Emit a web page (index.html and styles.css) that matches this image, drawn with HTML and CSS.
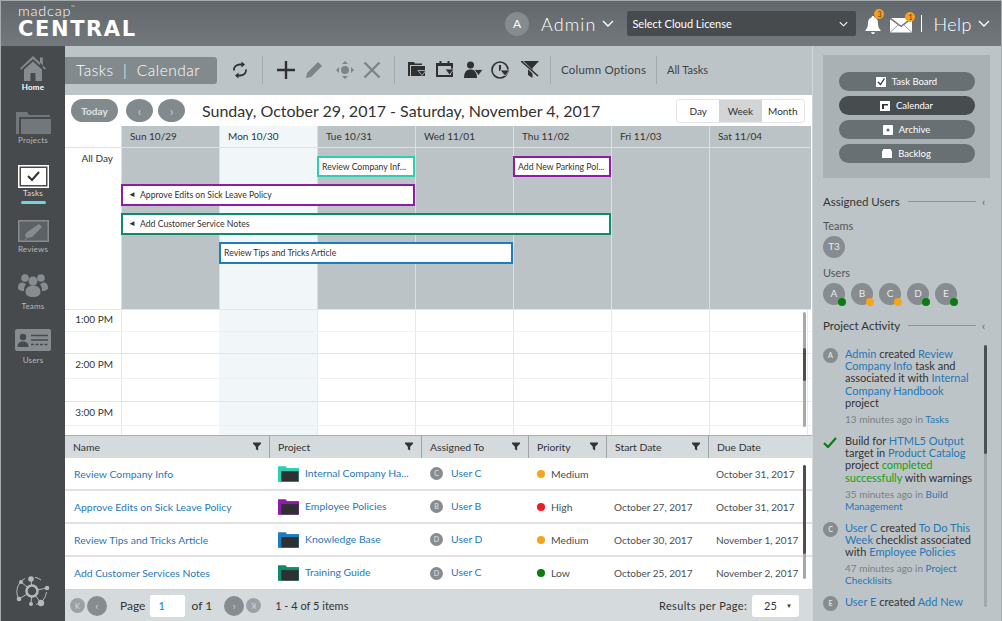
FILE: index.html
```html
<!DOCTYPE html>
<html lang="en">
<head>
    <meta charset="UTF-8">
    <title>MadCap Central - Tasks Calendar</title>
    <link rel="stylesheet" href="styles.css">
</head>
<body>
<svg class="defs" width="0" height="0">
    <symbol id="funnel" viewBox="0 0 10 10"><path d="M0 0h10v1.500L6.400 5.200V10L3.600 8.400V5.200L0 1.500z" fill="currentColor"/></symbol>
    <symbol id="folder" viewBox="0 0 22 16"><path d="M0 0h8l1.500 2H22v2H3v12H0z" fill="currentColor"/><rect x="1" y="2" width="21" height="14" fill="currentColor"/><rect x="3.500" y="5" width="18" height="11" fill="#2e3032"/></symbol>
    <symbol id="chev" viewBox="0 0 12 7"><path d="M1 1l5 5 5-5" fill="none" stroke="currentColor" stroke-width="1.400"/></symbol>
</svg>
<div class="app">
    <header class="topbar">
        <div class="logo">
            <div class="logo-small">madcap<sup>™</sup></div>
            <div class="logo-big">CENTRAL</div>
        </div>
        <div class="avatar-top">A</div>
        <div class="admin">Admin</div>
        <svg class="chev-top"><use href="#chev"/></svg>
        <div class="license">
            <span>Select Cloud License</span>
            <svg class="chev-small"><use href="#chev"/></svg>
        </div>
        <div class="notify">
            <svg width="16" height="20" viewBox="0 0 16 20"><path d="M8 1c.9 0 1.400.6 1.400 1.400C12 3.100 13 5.300 13 8c0 3.500.8 5.500 2.500 7v1H.5v-1C2.200 13.500 3 11.500 3 8c0-2.700 1-4.900 3.600-5.600C6.600 1.600 7.100 1 8 1zM6 17.200h4C9.800 18.400 9 19 8 19s-1.800-.6-2-1.800z" fill="#fff"/></svg>
            <span class="badge">3</span>
        </div>
        <div class="notify mail">
            <svg width="22" height="15" viewBox="0 0 22 15"><path d="M0 1l11 8 11-8v13.500H0z" fill="#fff"/><path d="M1 0h20L11 7.500z" fill="#fff"/><path d="M0 14.500l8-7.500M22 14.500L14 7M0 .7l11 8 11-8" stroke="#7b8185" stroke-width=".8" fill="none"/></svg>
            <span class="badge">1</span>
        </div>
        <div class="pipe"></div>
        <div class="help">Help</div>
        <svg class="chev-top"><use href="#chev"/></svg>
    </header>

    <div class="content">
        <nav class="sidenav">
            <a class="nav-item nav-home">
                <svg width="26" height="26" viewBox="0 0 26 26"><path d="M13 1L0 13.500l1.200 1L13 4l7 6.200V2.500h2.800v10.300l2 1.700 1.200-1zM4 14.500L13 6.500l9 8V26h-6.500v-8h-5v8H4z" fill="#868c90"/></svg>
                <span>Home</span>
            </a>
            <a class="nav-item nav-projects">
                <svg width="35" height="22" viewBox="0 0 35 22"><path d="M0 0h11l2 3h21v2H3v17H0z" fill="#71777a"/><rect x="5" y="7" width="30" height="15" fill="#71777a"/></svg>
                <span>Projects</span>
            </a>
            <a class="nav-item nav-active">
                <svg width="31" height="23" viewBox="0 0 31 23"><rect x=".75" y=".75" width="29.500" height="21.500" fill="#464a4d" stroke="#fff" stroke-width="1.500"/><rect x="3" y="3" width="25" height="17" fill="#fff"/><path d="M10 11l4 4 7-8" fill="none" stroke="#333" stroke-width="2"/></svg>
                <span>Tasks</span>
                <i class="nav-mark"></i>
            </a>
            <a class="nav-item nav-reviews">
                <svg width="31" height="22" viewBox="0 0 31 22"><rect x=".75" y=".75" width="29.500" height="20.500" fill="#5b6164" stroke="#868c90" stroke-width="1.500"/><path d="M9 18l-2-2 1-3L21 4l3 3-10 10z" fill="#868c90"/><path d="M7 20l2-2" stroke="#868c90"/></svg>
                <span>Reviews</span>
            </a>
            <a class="nav-item">
                <svg width="30" height="25" viewBox="0 0 30 25" fill="#868c90"><circle cx="7" cy="5" r="3.800"/><circle cx="23" cy="5" r="3.800"/><circle cx="15" cy="8" r="4.500"/><path d="M0 15c0-4 2-5.500 4-5.500 1.500 0 3 .8 4 2-1.500 1.500-2 3-2 6.500-3 0-6-1-6-3zM30 15c0-4-2-5.500-4-5.500-1.500 0-3 .8-4 2 1.500 1.500 2 3 2 6.500 3 0 6-1 6-3zM7.500 19c0-4 3-6.500 7.500-6.500s7.500 2.500 7.500 6.500c0 3-3 5-7.500 5s-7.500-2-7.500-5z"/></svg>
                <span>Teams</span>
            </a>
            <a class="nav-item nav-users">
                <svg width="36" height="22" viewBox="0 0 36 22"><rect width="36" height="22" rx="2" fill="#868c90"/><circle cx="8" cy="8" r="3.200" fill="#464a4d"/><path d="M2.500 18c0-4 2.500-5.500 5.500-5.500s5.500 1.500 5.500 5.500z" fill="#464a4d"/><path d="M16 6.500h17M16 11h17" stroke="#464a4d" stroke-width="1.500"/><path d="M16 15.500h17" stroke="#464a4d" stroke-width="1.500" stroke-dasharray="3 1.500"/></svg>
                <span>Users</span>
            </a>
            <svg class="nav-network" width="36" height="34" viewBox="0 0 36 34" fill="none" stroke="#b4b9bc" stroke-width="1">
                <path d="M10 3.500A15 15 0 0 0 5 26M21 29.500A15 15 0 0 0 31.500 17M26 5A15 15 0 0 0 20 2.300"/>
                <path d="M17 16L16 3M17 16L32 13M17 16L6 7M17 16L4 24M17 16L16 29M17 16L26 28"/>
                <g fill="#b4b9bc" stroke="none"><circle cx="16" cy="4" r="2.800"/><circle cx="32" cy="13" r="2.300"/><circle cx="6" cy="7" r="2"/><circle cx="4" cy="24" r="2.300"/><circle cx="16" cy="29" r="2"/><circle cx="26" cy="28" r="3.200"/></g>
                <circle cx="17" cy="16" r="5.500" fill="#464a4d" stroke-width="2.500"/>
            </svg>
        </nav>

        <main class="main">
            <div class="toolbar">
                <div class="page-tab">Tasks&nbsp; | &nbsp;Calendar</div>
                <svg class="tool tool-refresh" width="16" height="18" viewBox="0 0 16 18" fill="none" stroke="#2e3032" stroke-width="1.800"><path d="M2 9.500C1.500 6 4.500 3.500 8 3.500h3"/><path d="M14 8.500c.5 3.500-2.500 6-6 6H5"/><path d="M9.500 .5l3.500 3-3.500 3zM6.500 11.500l-3.500 3 3.500 3z" fill="#2e3032" stroke="none"/></svg>
                <i class="sep sep-a"></i>
                <svg class="tool tool-plus" width="18" height="18" viewBox="0 0 18 18"><path d="M7.800 0h2.400v7.800H18v2.400h-7.800V18H7.800v-7.800H0V7.800h7.800z" fill="#2e3032"/></svg>
                <svg class="tool tool-pencil" width="18" height="18" viewBox="0 0 18 18"><path d="M13 1l4 4L6 16l-5 1 1-5z" fill="#7e8386"/></svg>
                <svg class="tool tool-move" width="18" height="18" viewBox="0 0 18 18" fill="#7e8386"><path d="M9 0l3 3H6zM9 18l-3-3h6zM0 9l3-3v6zM18 9l-3 3V6z"/><circle cx="9" cy="9" r="4"/></svg>
                <svg class="tool tool-x" width="18" height="18" viewBox="0 0 18 18"><path d="M1.500 1.500l15 15M16.500 1.500l-15 15" stroke="#7e8386" stroke-width="2.400"/></svg>
                <i class="sep sep-b"></i>
                <svg class="tool tool-f1" width="18" height="15" viewBox="0 0 18 15" fill="#2e3032"><path d="M0 0h6l1 1.500h7v1.500H2v11H0z"/><rect x="3" y="4" width="14" height="10"/><path d="M10 8.500h8l-4 5z" stroke="#bdc4c7" stroke-width=".8"/></svg>
                <svg class="tool tool-f2" width="18" height="17" viewBox="0 0 18 17" fill="none" stroke="#2e3032" stroke-width="2"><path d="M1 3h15v12H1z"/><path d="M1 3.500h15" stroke-width="3"/><path d="M4.500 0v3M12.500 0v3"/><path d="M9 8h9l-4.500 6z" fill="#2e3032" stroke="#bdc4c7" stroke-width=".8"/></svg>
                <svg class="tool tool-f3" width="19" height="17" viewBox="0 0 19 17" fill="#2e3032"><circle cx="6.500" cy="4" r="3.500"/><path d="M0 17c0-6 2.500-8.500 6.500-8.500S13 11 13 17z"/><path d="M10 8.500h9l-4.500 6z" stroke="#bdc4c7" stroke-width=".8"/></svg>
                <svg class="tool tool-f4" width="19" height="18" viewBox="0 0 19 18" fill="none" stroke="#2e3032" stroke-width="1.600"><circle cx="9" cy="9" r="8"/><path d="M9 4v6" stroke-width="2"/><path d="M9 9h10l-5 6z" fill="#2e3032" stroke="#bdc4c7" stroke-width=".8"/></svg>
                <svg class="tool tool-f5" width="18" height="17" viewBox="0 0 18 17" fill="#2e3032"><path d="M0 0h18l-6.500 7V17L7 14V7z"/><path d="M1.500 1L16 15" stroke="#bdc4c7" stroke-width="2.800"/><path d="M0 0l17 15" stroke="#2e3032" stroke-width="1.600"/></svg>
                <i class="sep sep-c"></i>
                <span class="tool-link tool-cols">Column Options</span>
                <i class="sep sep-d"></i>
                <span class="tool-link tool-all">All Tasks</span>
            </div>

            <section class="calendar">
                <div class="cal-top">
                    <button class="pill">Today</button>
                    <button class="round">‹</button>
                    <button class="round">›</button>
                    <h1 class="cal-title">Sunday, October 29, 2017 - Saturday, November 4, 2017</h1>
                    <div class="views">
                        <span>Day</span>
                        <span class="view-on">Week</span>
                        <span>Month</span>
                    </div>
                </div>
                <div class="cal-grid">
                    <div class="day-heads">
                        <div class="gutter"></div>
                        <div>Sun 10/29</div>
                        <div class="today">Mon 10/30</div>
                        <div>Tue 10/31</div>
                        <div>Wed 11/01</div>
                        <div>Thu 11/02</div>
                        <div>Fri 11/03</div>
                        <div>Sat 11/04</div>
                    </div>
                    <div class="allday">
                        <div class="allday-label">All Day</div>
                        <div class="col c1"></div>
                        <div class="col c2 today"></div>
                        <div class="col c3"></div>
                        <div class="col c4"></div>
                        <div class="col c5"></div>
                        <div class="col c6"></div>
                        <div class="col c7"></div>
                        <div class="event ev-teal">Review Company Inf...</div>
                        <div class="event ev-parking">Add New Parking Pol...</div>
                        <div class="event ev-purple"><b>◄</b>Approve Edits on Sick Leave Policy</div>
                        <div class="event ev-green"><b>◄</b>Add Customer Service Notes</div>
                        <div class="event ev-blue">Review Tips and Tricks Article</div>
                    </div>
                    <div class="times">
                        <div class="time-row"><span>1:00 PM</span></div>
                        <div class="time-row half"></div>
                        <div class="time-row"><span>2:00 PM</span></div>
                        <div class="time-row half"></div>
                        <div class="time-row"><span>3:00 PM</span></div>
                        <div class="time-row half"></div>
                        <i class="scroll scroll-cal"><i></i></i>
                    </div>
                </div>
            </section>

            <section class="tasks">
                <table class="task-table">
                    <colgroup>
                        <col class="w-name"><col class="w-project"><col class="w-user"><col class="w-pri"><col class="w-start"><col>
                    </colgroup>
                    <thead>
                        <tr>
                            <th>Name<svg class="funnel"><use href="#funnel"/></svg></th>
                            <th>Project<svg class="funnel"><use href="#funnel"/></svg></th>
                            <th>Assigned To<svg class="funnel"><use href="#funnel"/></svg></th>
                            <th>Priority<svg class="funnel"><use href="#funnel"/></svg></th>
                            <th>Start Date<svg class="funnel"><use href="#funnel"/></svg></th>
                            <th>Due Date</th>
                        </tr>
                    </thead>
                    <tbody>
                        <tr>
                            <td><a>Review Company Info</a></td>
                            <td><svg class="folder f-teal"><use href="#folder"/></svg><a>Internal Company Ha...</a></td>
                            <td><i class="mini">C</i><a>User C</a></td>
                            <td><i class="dot d-orange"></i>Medium</td>
                            <td></td>
                            <td>October 31, 2017</td>
                        </tr>
                        <tr>
                            <td><a>Approve Edits on Sick Leave Policy</a></td>
                            <td><svg class="folder f-purple"><use href="#folder"/></svg><a>Employee Policies</a></td>
                            <td><i class="mini">B</i><a>User B</a></td>
                            <td><i class="dot d-red"></i>High</td>
                            <td>October 27, 2017</td>
                            <td>October 31, 2017</td>
                        </tr>
                        <tr>
                            <td><a>Review Tips and Tricks Article</a></td>
                            <td><svg class="folder f-blue"><use href="#folder"/></svg><a>Knowledge Base</a></td>
                            <td><i class="mini">D</i><a>User D</a></td>
                            <td><i class="dot d-orange"></i>Medium</td>
                            <td>October 30, 2017</td>
                            <td>November 1, 2017</td>
                        </tr>
                        <tr>
                            <td><a>Add Customer Services Notes</a></td>
                            <td><svg class="folder f-green"><use href="#folder"/></svg><a>Training Guide</a></td>
                            <td><i class="mini">D</i><a>User C</a></td>
                            <td><i class="dot d-green"></i>Low</td>
                            <td>October 25, 2017</td>
                            <td>November 2, 2017</td>
                        </tr>
                    </tbody>
                </table>
                <i class="scroll scroll-table"><i></i></i>
                <div class="pager">
                    <button class="pg pg-small">K</button>
                    <button class="pg">‹</button>
                    <span class="pg-page">Page</span>
                    <span class="pg-input">1</span>
                    <span class="pg-of">of 1</span>
                    <button class="pg">›</button>
                    <button class="pg pg-small pg-flip">K</button>
                    <span class="pg-count">1 - 4 of 5 items</span>
                    <span class="pg-results">Results per Page:</span>
                    <span class="pg-size">25<b>▼</b></span>
                </div>
            </section>
        </main>

        <aside class="sidebar">
            <div class="view-box">
                <button class="view-btn"><svg width="10" height="10" viewBox="0 0 10 10"><rect width="10" height="10" fill="#fff"/><path d="M2 5l2.500 2.500L8.500 1.500" stroke="#333" stroke-width="1.300" fill="none"/></svg>Task Board</button>
                <button class="view-btn view-btn-on"><svg width="10" height="10" viewBox="0 0 10 10"><rect width="10" height="10" fill="#fff"/><path d="M2 3h6v1.500H4V8H2z" fill="#333"/></svg>Calendar</button>
                <button class="view-btn"><svg width="10" height="10" viewBox="0 0 10 10"><rect width="10" height="10" rx="1" fill="#fff"/><path d="M3.500 5h3M5 3.500v3" stroke="#333"/></svg>Archive</button>
                <button class="view-btn"><svg width="10" height="9" viewBox="0 0 10 9"><path d="M1.500 0h7L10 2.500V9H0V2.500z" fill="#fff"/></svg>Backlog</button>
            </div>

            <div class="side-head"><span>Assigned Users</span><i></i><b>‹</b></div>
            <div class="side-sub">Teams</div>
            <div class="people"><span class="person">T3</span></div>
            <div class="side-sub sub-users">Users</div>
            <div class="people">
                <span class="person">A<i class="on"></i></span>
                <span class="person">B<i class="away"></i></span>
                <span class="person">C<i class="away"></i></span>
                <span class="person">D<i class="on"></i></span>
                <span class="person">E<i class="on"></i></span>
            </div>

            <div class="side-head head-activity"><span>Project Activity</span><i></i><b>‹</b></div>
            <div class="activity">
                <div class="act">
                    <i class="act-av">A</i>
                    <div>
                        <p><a>Admin</a> created <a>Review</a><br><a>Company Info</a> task and<br>associated it with <a>Internal</a><br><a>Company Handbook</a><br>project</p>
                        <small>13 minutes ago in <a>Tasks</a></small>
                    </div>
                </div>
                <div class="act">
                    <svg class="act-check" width="14" height="11" viewBox="0 0 14 11"><path d="M1 6l4 4 8-9" fill="none" stroke="#0a7d12" stroke-width="2.200"/></svg>
                    <div>
                        <p>Build for <a>HTML5 Output</a><br>target in <a>Product Catalog</a><br>project <em>completed</em><br><em>successfully</em> with warnings</p>
                        <small>35 minutes ago in <a>Build</a><br><a>Management</a></small>
                    </div>
                </div>
                <div class="act">
                    <i class="act-av">C</i>
                    <div>
                        <p><a>User C</a> created <a>To Do This</a><br><a>Week</a> checklist associated<br>with <a>Employee Policies</a></p>
                        <small>47 minutes ago in <a>Project</a><br><a>Checklisits</a></small>
                    </div>
                </div>
                <div class="act">
                    <i class="act-av">E</i>
                    <div>
                        <p><a>User E</a> created <a>Add New</a></p>
                    </div>
                </div>
                <i class="scroll scroll-act"><i></i></i>
            </div>
        </aside>
    </div>
</div>
</body>
</html>
```

FILE: styles.css
```css
* {
    box-sizing: border-box;
}
html, body {
    margin: 0;
    height: 100%;
    overflow: hidden;
}
body {
    font-family: "Lato", "Open Sans", Arial, sans-serif;
    color: #333;
    font-size: 11px;
}
a {
    color: #1f77b8;
}
i, em {
    font-style: normal;
}
button {
    font: inherit;
    border: none;
    padding: 0;
}
.defs {
    position: absolute;
}
.app {
    width: 1002px;
    height: 621px;
    border: 1px solid #a6abad;
    border-bottom: none;
    display: flex;
    flex-direction: column;
    background: #bdc4c7;
}

/* top bar */
.topbar {
    height: 45px;
    flex: none;
    display: flex;
    align-items: center;
    color: #fff;
    background: linear-gradient(#62676b, #73787c);
    padding-left: 17px;
}
.logo {
    width: 487px;
    line-height: 1;
}
.logo-small {
    font-size: 14.500px;
    font-weight: 300;
    letter-spacing: .8px;
    height: 13px;
    margin-top: -3px;
}
.logo-small sup {
    font-size: 5px;
    vertical-align: 7px;
}
.logo-big {
    font-family: "DejaVu Sans", sans-serif;
    font-size: 21px;
    font-weight: 700;
    letter-spacing: 1.600px;
    margin-top: 2px;
}
.avatar-top {
    width: 24px;
    height: 24px;
    border-radius: 50%;
    background: #868b8f;
    text-align: center;
    line-height: 24px;
    font-size: 12px;
    margin-right: 12px;
}
.admin {
    font-size: 18px;
    font-weight: 300;
    letter-spacing: 1.100px;
}
.chev-top {
    width: 12px;
    height: 7px;
    margin-left: 6px;
    color: #fff;
}
.license {
    width: 229px;
    height: 25px;
    margin-left: 13px;
    margin-right: 9px;
    background: #474b4e;
    border-radius: 2px;
    padding: 0 8px 0 5px;
    display: flex;
    align-items: center;
    justify-content: space-between;
    font-size: 11px;
}
.chev-small {
    width: 9px;
    height: 6px;
}
.notify {
    position: relative;
    display: flex;
    margin-right: 9px;
    margin-top: 3px;
}
.mail {
    margin-right: 9px;
    margin-top: 4px;
}
.badge {
    position: absolute;
    right: -3px;
    top: -6px;
    width: 10px;
    height: 10px;
    border-radius: 50%;
    background: #f4a11c;
    font-size: 7px;
    line-height: 10px;
    text-align: center;
    color: #4a3a10;
}
.pipe {
    width: 1px;
    height: 17px;
    background: #fff;
}
.help {
    font-size: 18px;
    font-weight: 300;
    letter-spacing: .5px;
    margin-left: 11px;
}

.content {
    flex: 1;
    display: flex;
    min-height: 0;
}

/* left nav */
.sidenav {
    width: 64px;
    flex: none;
    background: #464a4d;
    display: flex;
    flex-direction: column;
    align-items: center;
    padding-top: 9px;
    gap: 18px;
    color: #b4b9bc;
    font-size: 8px;
    letter-spacing: .2px;
}
.nav-item {
    display: flex;
    flex-direction: column;
    align-items: center;
    gap: 3px;
    color: inherit;
}
.nav-home, .nav-projects {
    gap: 1px;
    margin-bottom: 2px;
}
.nav-home span {
    color: #fff;
    font-weight: 700;
}
.nav-active {
    color: #d8dcde;
    gap: 0;
    margin-bottom: -2px;
}
.nav-reviews {
    gap: 2px;
    margin-bottom: 1px;
}
.nav-users {
    gap: 4px;
}
.nav-mark {
    width: 25px;
    height: 3px;
    border-radius: 2px;
    background: #6fd6de;
    margin-top: 3px;
}
.nav-network {
    margin-top: auto;
    margin-bottom: 12px;
}

/* toolbar */
.main {
    width: 747px;
    flex: none;
    display: flex;
    flex-direction: column;
    min-height: 0;
}
.toolbar {
    height: 49px;
    flex: none;
    display: flex;
    align-items: center;
    padding-bottom: 2px;
}
.page-tab {
    width: 152px;
    height: 27px;
    background: #828a8e;
    border-radius: 0 3px 3px 0;
    color: #fff;
    font-size: 15.500px;
    font-weight: 300;
    letter-spacing: .5px;
    line-height: 27px;
    padding-left: 11px;
    margin-top: 2px;
}
.tool {
    flex: none;
}
.tool-refresh { margin-left: 15px; }
.tool-plus { margin-left: 14px; }
.tool-pencil { margin-left: 10px; }
.tool-move { margin-left: 13px; }
.tool-x { margin-left: 9px; }
.tool-f1 { margin-left: 13px; }
.tool-f2 { margin-left: 10px; }
.tool-f3 { margin-left: 10px; }
.tool-f4 { margin-left: 8px; }
.tool-f5 { margin-left: 11px; }
.sep {
    width: 1px;
    height: 28px;
    background: #a2a9ac;
    flex: none;
}
.sep-a { margin-left: 14px; }
.sep-b { margin-left: 13px; }
.sep-c { margin-left: 11px; }
.sep-d { margin-left: 10px; }
.tool-link {
    font-size: 11.500px;
    margin-left: 10px;
    color: #3d4144;
    white-space: nowrap;
}
.tool-cols { letter-spacing: .2px; }
.tool-all { font-size: 11px; }

/* calendar */
.calendar {
    height: 340px;
    flex: none;
    background: #fff;
    display: flex;
    flex-direction: column;
}
.cal-top {
    height: 31px;
    flex: none;
    display: flex;
    align-items: center;
    padding-left: 6px;
}
.pill {
    width: 47px;
    height: 23px;
    border-radius: 12px;
    background: #828a8e;
    color: #dfe3e5;
    font-size: 10px;
    font-weight: 700;
    margin-right: 8px;
}
.round {
    width: 27px;
    height: 23px;
    border-radius: 50%;
    background: #828a8e;
    color: #c6cbce;
    font-size: 13px;
    margin-right: 5px;
}
.cal-title {
    margin: 0 0 0 12px;
    font-size: 16px;
    font-weight: 400;
    width: 474px;
    white-space: nowrap;
    color: #333;
}
.views {
    display: flex;
    height: 24px;
    border: 1px solid #e3e6e7;
    border-radius: 3px;
    font-size: 10px;
    line-height: 22px;
    text-align: center;
    overflow: hidden;
}
.views span {
    width: 42.300px;
}
.view-on {
    background: #d2d4d5;
}
.cal-grid {
    flex: 1;
    display: flex;
    flex-direction: column;
    min-height: 0;
}
.day-heads, .allday {
    display: grid;
    grid-template-columns: 56px repeat(6, 98px) 1fr;
    width: 746px;
}
.day-heads {
    height: 22px;
    flex: none;
    border-bottom: 1px solid #dde2e4;
    font-size: 10px;
}
.day-heads div {
    background: #bcc3c6;
    border-left: 1px solid #dbe0e2;
    padding-left: 8px;
    line-height: 21px;
}
.day-heads .gutter {
    background: #fff;
    border: none;
}
.day-heads .today {
    background: #f1f6f9;
}
.allday {
    height: 161px;
    flex: none;
    grid-template-rows: 8px 21px 7px 22px 7px 22px 7px 22px 1fr;
}
.allday-label {
    grid-column: 1;
    grid-row: 1 / 4;
    text-align: right;
    padding: 4px 8px 0 0;
    font-size: 10px;
}
.col {
    grid-row: 1 / -1;
    background: #bcc3c6;
    border-left: 1px solid #dbe0e2;
}
.col.today {
    background: #f1f6f9;
}
.c1 { grid-column: 2; }
.c2 { grid-column: 3; }
.c3 { grid-column: 4; }
.c4 { grid-column: 5; }
.c5 { grid-column: 6; }
.c6 { grid-column: 7; }
.c7 { grid-column: 8; }
.event {
    background: #fff;
    border: 2px solid #999;
    font-size: 8.700px;
    line-height: 17px;
    padding-left: 3px;
    white-space: nowrap;
    overflow: hidden;
    z-index: 1;
}
.event b {
    font-size: 8px;
    font-weight: 400;
    margin: 0 4px 0 2px;
    vertical-align: 1px;
}
.ev-teal {
    grid-column: 4;
    grid-row: 2;
    border-color: #2ccfb0;
}
.ev-parking {
    grid-column: 6;
    grid-row: 2;
    border-color: #8e1da6;
}
.ev-purple {
    grid-column: 2 / span 3;
    grid-row: 4;
    border-color: #8e1da6;
}
.ev-green {
    grid-column: 2 / span 5;
    grid-row: 6;
    border-color: #0f8a6a;
}
.ev-blue {
    grid-column: 3 / span 3;
    grid-row: 8;
    border-color: #1c7dc0;
}
.times {
    flex: 1;
    position: relative;
    overflow: hidden;
}
.time-row {
    height: 22px;
    width: 746px;
    border-top: 1px solid #e2e5e7;
    background:
        linear-gradient(#f1f6f9, #f1f6f9) 154px 0 / 98px 100% no-repeat,
        repeating-linear-gradient(to right, #e6e9ea 0 1px, transparent 1px 98px) 56px 0 / 690px 100% no-repeat;
    font-size: 10px;
}
.time-row span {
    display: block;
    width: 48px;
    text-align: right;
    line-height: 18px;
}
.time-row:nth-child(3) { height: 25px; }
.time-row:nth-child(3) span, .time-row:nth-child(5) span { line-height: 21px; }
.time-row:nth-child(4) { height: 23px; }
.time-row:nth-child(5) { height: 24px; }
.time-row.half {
    border-top-color: #eef0f1;
}
.scroll {
    position: absolute;
    width: 3px;
    background: #a4a9ac;
    border-radius: 2px;
}
.scroll i {
    display: block;
    background: #4b5053;
    width: 3px;
    border-radius: 2px;
}
.scroll-cal {
    left: 738px;
    top: 3px;
    height: 115px;
}
.scroll-cal i {
    margin-top: 36px;
    height: 33px;
}

/* task grid */
.tasks {
    flex: 1;
    position: relative;
    display: flex;
    flex-direction: column;
    min-height: 0;
    border-top: 1px solid #8db4d6;
    background: #fff;
}
.task-table {
    width: 747px;
    flex: none;
    border-collapse: separate;
    border-spacing: 0;
    table-layout: fixed;
    font-size: 10.400px;
}
.w-name { width: 204px; }
.w-project { width: 152px; }
.w-user { width: 107px; }
.w-pri { width: 78px; }
.w-start { width: 102px; }
.task-table th {
    height: 22px;
    background: #d5dadc;
    font-weight: 400;
    text-align: left;
    padding: 0 8px;
    border-left: 1px solid #9ea4a7;
    position: relative;
}
.task-table th:first-child {
    border-left: none;
}
.funnel {
    position: absolute;
    right: 8px;
    top: 6px;
    width: 8px;
    height: 9px;
    color: #333;
}
.task-table td {
    height: 33px;
    padding: 0 8px 0 9px;
    border-bottom: 2px solid #dfe2e3;
    white-space: nowrap;
    overflow: hidden;
    color: #4a4e50;
}
.task-table td:nth-child(n+5) {
    font-size: 10px;
    padding-left: 8px;
}
.task-table tr:last-child td {
    border-bottom: none;
    height: 32px;
}
.folder {
    width: 21px;
    height: 16px;
    margin-right: 6px;
    vertical-align: middle;
}
.f-teal { color: #2ccfb0; }
.f-purple { color: #8e1da6; }
.f-blue { color: #1c7dc0; }
.f-green { color: #0f8a6a; }
.mini {
    display: inline-block;
    width: 13px;
    height: 13px;
    border-radius: 50%;
    background: #868c90;
    color: #e4e6e7;
    font-size: 7px;
    text-align: center;
    line-height: 13px;
    margin-right: 8px;
    vertical-align: middle;
}
.dot {
    display: inline-block;
    width: 8px;
    height: 8px;
    border-radius: 50%;
    margin-right: 6px;
}
.d-orange { background: #f7a31c; }
.d-red { background: #ec1c24; }
.d-green { background: #0a7d12; }
.scroll-table {
    left: 738px;
    top: 29px;
    height: 114px;
}
.scroll-table i {
    height: 89px;
}
.pager {
    flex: 1;
    background: #d5dadc;
    display: flex;
    align-items: center;
    padding-left: 5px;
    font-size: 11px;
    border-top: 1px solid #cfd3d5;
}
.pg {
    width: 20px;
    height: 20px;
    border-radius: 50%;
    background: #868c90;
    color: #c9cdd0;
    font-size: 12px;
    margin-right: 2px;
    flex: none;
}
.pg-small {
    width: 15px;
    height: 15px;
    background: #9ba1a4;
    font-size: 7px;
    font-weight: 700;
}
.pg-flip {
    transform: scaleX(-1);
}
.pg-page {
    margin-left: 11px;
    margin-right: 5px;
    font-size: 12px;
}
.pg-input {
    width: 35px;
    height: 22px;
    background: #fff;
    border-radius: 2px;
    padding-left: 8px;
    line-height: 22px;
    color: #1f77b8;
}
.pg-of {
    margin-left: 6px;
    margin-right: 12px;
    font-size: 12px;
}
.pg-count {
    margin-left: 12px;
}
.pg-results {
    margin-left: auto;
    margin-right: 5px;
    letter-spacing: .35px;
}
.pg-size {
    width: 47px;
    height: 22px;
    background: #fff;
    border-radius: 3px;
    padding-left: 12px;
    line-height: 22px;
    margin-right: 13px;
    display: flex;
    justify-content: space-between;
    padding-right: 7px;
}
.pg-size b {
    font-size: 6px;
    font-weight: 400;
}

/* right panel */
.sidebar {
    flex: 1;
    min-width: 0;
    padding: 9px 11px 0 10px;
    overflow: hidden;
    border-left: 1px solid #d2d7d9;
}
.view-box {
    height: 123px;
    background: #a9b1b4;
    padding-top: 17px;
    display: flex;
    flex-direction: column;
    align-items: center;
    gap: 5px;
}
.view-btn {
    width: 136px;
    height: 19px;
    border-radius: 10px;
    background: #687073;
    color: #fff;
    font-size: 9.500px;
    display: flex;
    align-items: center;
    justify-content: center;
    gap: 6px;
}
.view-btn-on {
    background: #474c4f;
}
.side-head {
    display: flex;
    align-items: center;
    margin-top: 17px;
    font-size: 11.500px;
    color: #333;
}
.side-head i {
    flex: 1;
    height: 1px;
    background: #8f9497;
    margin: 0 6px 0 8px;
}
.side-head b {
    font-weight: 400;
    width: 8px;
    color: #666;
}
.side-sub {
    margin-top: 11px;
    font-size: 11px;
    color: #555;
}
.sub-users {
    margin-top: 8px;
}
.people {
    display: flex;
    gap: 6px;
    margin-top: 4px;
}
.person {
    position: relative;
    width: 22px;
    height: 22px;
    border-radius: 50%;
    background: #868c90;
    color: #e9ebec;
    font-size: 10px;
    text-align: center;
    line-height: 21px;
}
.person i {
    position: absolute;
    right: -1px;
    bottom: -1px;
    width: 8px;
    height: 8px;
    border-radius: 50%;
}
.on { background: #0a7d12; }
.away { background: #f7a31c; }
.head-activity {
    margin-top: 14px;
}
.activity {
    position: relative;
    margin-top: 16px;
    padding-right: 4px;
    font-size: 11px;
    line-height: 12.200px;
}
.act {
    display: flex;
    gap: 7px;
    margin-bottom: 10px;
    white-space: nowrap;
}
.act-av {
    flex: none;
    width: 15px;
    height: 15px;
    border-radius: 50%;
    background: #868c90;
    color: #dfe2e3;
    font-size: 7px;
    font-weight: 700;
    text-align: center;
    line-height: 15px;
}
.act-check {
    flex: none;
    margin: 2px 1px 0 0;
}
.act p {
    margin: 0 0 4px;
    color: #333;
}
.act small {
    display: block;
    font-size: 10px;
    line-height: 12px;
    color: #7a7f82;
}
.act em {
    color: #12a012;
}
.scroll-act {
    left: 161px;
    top: -3px;
    width: 3px;
    height: 262px;
}
.scroll-act i {
    height: 109px;
}
```
